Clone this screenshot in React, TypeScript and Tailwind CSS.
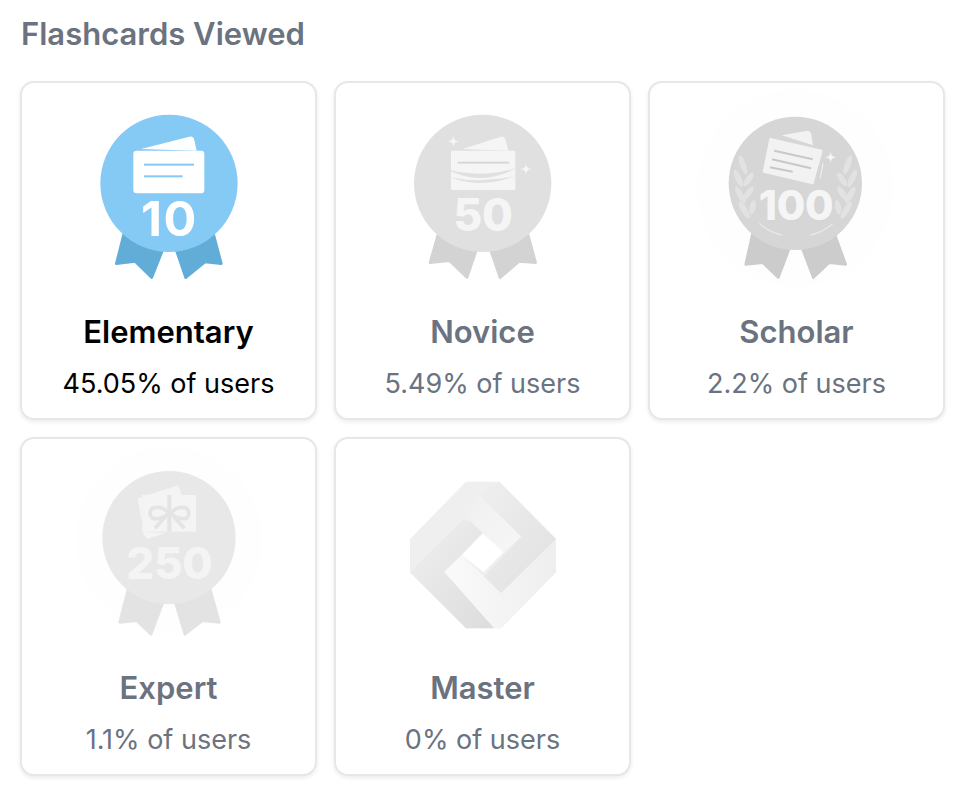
const sparkle = (x: number, y: number, r: number) =>
  `M${x} ${y - r}Q${x} ${y} ${x + r} ${y}Q${x} ${y} ${x} ${y + r}Q${x} ${y} ${x - r} ${y}Q${x} ${y} ${x} ${y - r}Z`;

function BadgeText({ x, y, size, fill, weight = 800, spacing = -1, children }: { x: number; y: number; size: number; fill: string; weight?: number; spacing?: number; children: string }) {
  return (
    <text x={x} y={y} fontSize={size} fontWeight={weight} fill={fill} textAnchor="middle" letterSpacing={spacing}>
      {children}
    </text>
  );
}

function Elementary() {
  return (
    <g transform="translate(1,0) scale(0.3333)">
      <g fill="#62acd8" stroke="#62acd8" strokeWidth="8" strokeLinejoin="round">
        <path d="M132 400L109 491L165 484L215 533L250 445Z" />
        <path d="M400 400L424 491L375 486L317 533L287 445Z" />
      </g>
      <circle cx="267" cy="250" r="206" fill="#85caf4" />
      <path d="M183 147L328 110Q340 108 343 120L350 152Z" fill="#fff" />
      <rect x="160" y="152" width="213" height="128" rx="10" fill="#fff" />
      <rect x="192" y="191" width="150" height="6" fill="#85caf4" />
      <rect x="192" y="226" width="116" height="6" fill="#85caf4" />
      <BadgeText x={268} y={408} size={146} weight={700} spacing={4} fill="#fff">10</BadgeText>
    </g>
  );
}

function Novice() {
  return (
    <g transform="translate(-2,0) scale(0.3333)">
      <g fill="#d3d3d3" stroke="#d3d3d3" strokeWidth="8" strokeLinejoin="round">
        <path d="M142 400L117 488L175 482L228 533L258 445Z" />
        <path d="M410 400L434 488L385 484L327 533L297 445Z" />
      </g>
      <circle cx="275" cy="250" r="206" fill="#e0e0e0" />
      <path d="M215 147L330 110Q340 108 343 118L352 152Z" fill="#f5f5f5" />
      <rect x="180" y="152" width="193" height="118" rx="4" fill="#f5f5f5" />
      <rect x="200" y="185" width="155" height="6" fill="#d8d8d8" />
      <path d="M168 208Q270 262 376 204Q270 236 168 208Z" fill="#e0e0e0" />
      <path d="M178 232Q270 268 372 228Q270 252 178 232Z" fill="#e0e0e0" />
      <path d={sparkle(187, 124, 19)} fill="#f5f5f5" />
      <path d={sparkle(405, 207, 19)} fill="#f5f5f5" />
      <BadgeText x={276} y={393} size={134} fill="#f5f5f5">50</BadgeText>
    </g>
  );
}

const laurel = [
  [156, 195, -20, 30],
  [142, 235, -25, 28],
  [173, 238, 35, 24],
  [148, 285, -30, 28],
  [172, 280, 35, 24],
  [160, 330, -30, 30],
  [185, 322, 10, 22],
];

function Scholar() {
  return (
    <g transform="translate(-16,0) scale(0.3333)">
      <circle cx="313" cy="265" r="295" fill="#fefefe" />
      <g fill="#cccccc" stroke="#cccccc" strokeWidth="8" strokeLinejoin="round">
        <path d="M185 400L164 493L215 488L262 533L297 440Z" />
        <path d="M430 400L464 493L415 488L367 533L332 440Z" />
      </g>
      <circle cx="313" cy="250" r="200" fill="#d6d6d6" />
      <path d="M272 106L350 92Q358 92 360 100L366 136Z" fill="#f2f2f2" />
      <path d="M238 117L392 152L365 250L218 215Z" fill="#f2f2f2" stroke="#f2f2f2" strokeWidth="6" strokeLinejoin="round" />
      <g stroke="#c8c8c8" strokeWidth="6">
        <path d="M250 152L365 178" />
        <path d="M243 178L360 205" />
        <path d="M237 202L305 215" />
      </g>
      <path d="M396 190L388 235" stroke="#f2f2f2" strokeWidth="3" />
      <path d={sparkle(419, 172, 18)} fill="#f5f5f5" />
      {laurel.map(([x, y, a, l]) => (
        <g key={`${x}-${y}`} fill="#e2e2e2">
          <ellipse cx={x} cy={y} rx={9} ry={l} transform={`rotate(${a} ${x} ${y})`} />
          <ellipse cx={626 - x} cy={y} rx={9} ry={l} transform={`rotate(${-a} ${626 - x} ${y})`} />
        </g>
      ))}
      <path d="M205 370Q235 397 272 405" fill="none" stroke="#e8e8e8" strokeWidth="4" />
      <path d="M358 405Q395 397 425 372" fill="none" stroke="#e8e8e8" strokeWidth="4" />
      <BadgeText x={315} y={361} size={124} fill="#f5f5f5">100</BadgeText>
    </g>
  );
}

function Expert() {
  return (
    <g transform="translate(-14,4) scale(0.3333)">
      <circle cx="312" cy="240" r="280" fill="#fefefe" />
      <g fill="#e3e3e3" stroke="#e3e3e3" strokeWidth="8" strokeLinejoin="round">
        <path d="M190 385L164 487L215 482L258 523L295 425Z" />
        <path d="M435 385L463 487L412 482L360 523L330 425Z" />
      </g>
      <circle cx="312" cy="233" r="200" fill="#e8e8e8" />
      <path d="M218 115L340 76L350 105L232 105L232 190Z" fill="#f4f4f4" />
      <path d="M232 215L300 220L245 236Z" fill="#f4f4f4" />
      <rect x="232" y="105" width="161" height="110" fill="#f4f4f4" />
      <rect x="307" y="105" width="12" height="110" fill="#e4e4e4" />
      <g fill="none" stroke="#e4e4e4" strokeWidth="11">
        <path d="M312 160Q290 135 262 145Q248 160 262 175Q290 180 312 160Z" />
        <path d="M316 160Q340 135 365 145Q378 160 365 175Q340 180 316 160Z" />
        <path d="M305 165L270 205" />
        <path d="M322 165L358 205" />
      </g>
      <BadgeText x={313} y={356} size={132} fill="#f4f4f4">250</BadgeText>
    </g>
  );
}

function Master() {
  return (
    <g transform="translate(-2,9) scale(0.3333)">
      <defs>
        <linearGradient id="masterDark" x1="0" y1="0" x2="1" y2="1">
          <stop offset="0" stopColor="#f0f0f0" />
          <stop offset="1" stopColor="#dcdcdc" />
        </linearGradient>
        <linearGradient id="masterLight" x1="0" y1="0.5" x2="1" y2="0.5">
          <stop offset="0" stopColor="#fafafa" />
          <stop offset="1" stopColor="#eeeeee" />
        </linearGradient>
        <linearGradient id="masterRight" x1="0" y1="0" x2="1" y2="1">
          <stop offset="0" stopColor="#efefef" />
          <stop offset="1" stopColor="#e0e0e0" />
        </linearGradient>
        <linearGradient id="masterTop" x1="0" y1="0" x2="1" y2="1">
          <stop offset="0" stopColor="#efefef" />
          <stop offset="1" stopColor="#f7f7f7" />
        </linearGradient>
      </defs>
      <path d="M57 222L225 50L325 50L495 222L495 322L330 490L225 490L57 322Z" fill="#efefef" />
      <path d="M265 90L325 50L495 222L330 385L278 335L390 215Z" fill="url(#masterRight)" />
      <path d="M265 90L390 215L338 262L275 205L240 170L215 120Z" fill="url(#masterTop)" />
      <path d="M57 322L215 165L240 170L275 205L212 270L160 320L310 490L225 490Z" fill="url(#masterDark)" />
      <path d="M160 320L212 270L330 385L495 222L495 322L330 490L310 490Z" fill="url(#masterLight)" />
      <path d="M275 205L338 262L278 322L212 270Z" fill="#fff" />
    </g>
  );
}

const badges = [
  { name: "Elementary", stat: "45.05% of users", art: <Elementary />, earned: true },
  { name: "Novice", stat: "5.49% of users", art: <Novice />, earned: false },
  { name: "Scholar", stat: "2.2% of users", art: <Scholar />, earned: false },
  { name: "Expert", stat: "1.1% of users", art: <Expert />, earned: false },
  { name: "Master", stat: "0% of users", art: <Master />, earned: false },
];

export default function App() {
  return (
    <div className="min-h-[804px] bg-white pl-[20px] pt-[16px] font-[family-name:Inter,sans-serif]">
      <h2 className="ml-px text-[31px] leading-[36px] font-semibold text-[#6b7280]">Flashcards Viewed</h2>
      <div className="mt-[29px] grid w-[925px] grid-cols-3 gap-[17px]">
        {badges.map((badge) => (
          <div
            key={badge.name}
            className="flex h-[339px] flex-col items-center rounded-[14px] border-2 border-[#e5e7eb] bg-white pt-[17px] shadow-[0_2px_4px_rgba(0,0,0,0.08)]"
          >
            <svg viewBox="0 0 180 190" className="h-[190px] w-[180px] overflow-visible">
              {badge.art}
            </svg>
            <h3
              className={`mt-[24px] text-[31px] leading-[36px] font-semibold ${
                badge.earned ? "text-black" : "text-[#6b7280]"
              }`}
            >
              {badge.name}
            </h3>
            <p className={`mt-[16px] text-[27px] leading-[36px] ${badge.earned ? "text-black" : "text-[#6b7280]"}`}>
              {badge.stat}
            </p>
          </div>
        ))}
      </div>
    </div>
  );
}
